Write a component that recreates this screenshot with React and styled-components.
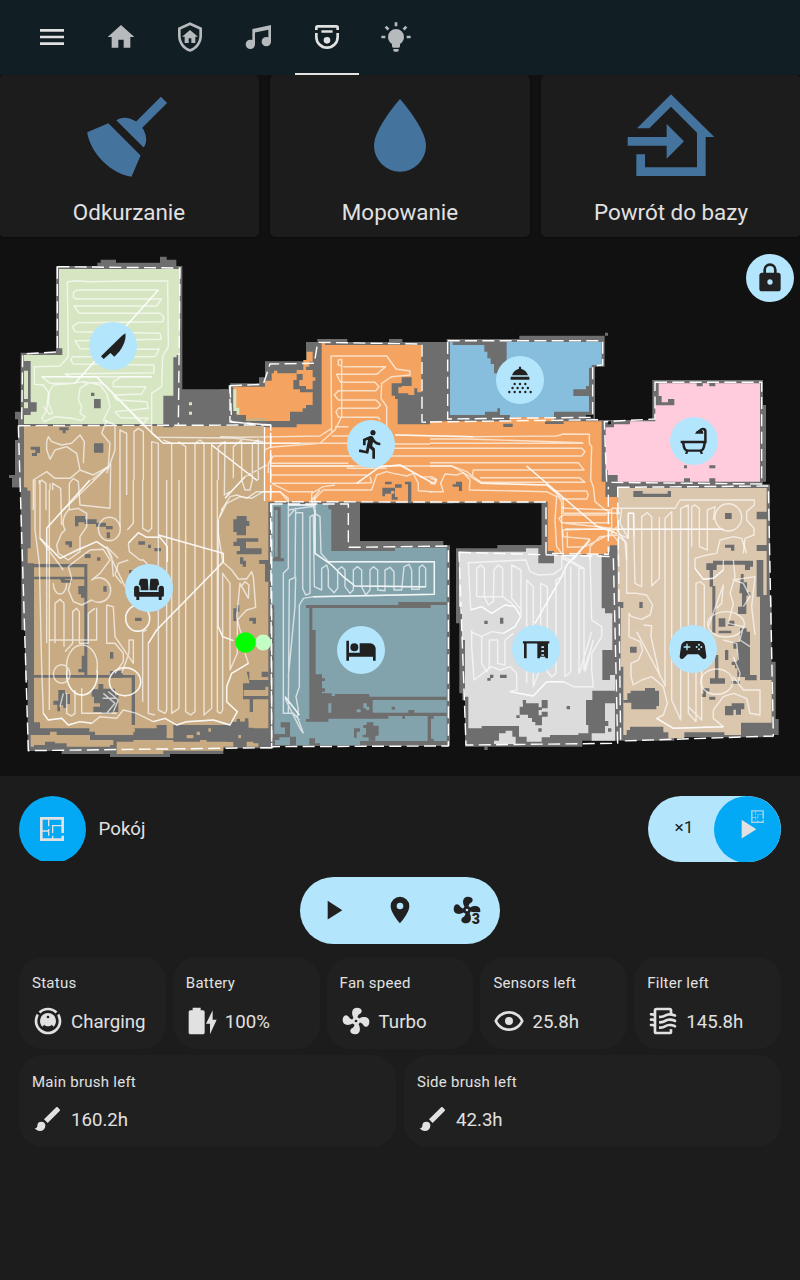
import React from "react";
import styled, { createGlobalStyle } from "styled-components";

const GlobalStyle = createGlobalStyle`
  * { box-sizing: border-box; }
  body {
    margin: 0;
    background: #111111;
    color: #e1e1e1;
    font-family: Roboto, "Liberation Sans", sans-serif;
  }
`;

const icons = {
  menu: "M3,6H21V8H3V6M3,11H21V13H3V11M3,16H21V18H3V16Z",
  home: "M10,20V14H14V20H19V12H22L12,3L2,12H5V20H10Z",
  shield:
    "M11,13H13V16.5H16V11.8H18L12,6.8L6,11.8H8V16.5H11V13M21,11C21,16.55 17.16,21.74 12,23C6.84,21.74 3,16.55 3,11V5L12,1L21,5V11M12,21C15.75,20 19,15.54 19,11.22V6.3L12,3.18L5,6.3V11.22C5,15.54 8.25,20 12,21Z",
  music:
    "M21,3V15.5A3.5,3.5 0 0,1 17.5,19A3.5,3.5 0 0,1 14,15.5A3.5,3.5 0 0,1 17.5,12C18.04,12 18.55,12.12 19,12.34V6.47L9,8.6V17.5A3.5,3.5 0 0,1 5.5,21A3.5,3.5 0 0,1 2,17.5A3.5,3.5 0 0,1 5.5,14C6.04,14 6.55,14.12 7,14.34V6L21,3Z",
  vacuumFront:
    "M3,6.75V5A2,2 0 0,1 5,3H19A2,2 0 0,1 21,5V6.75H19V5H5V6.75ZM7.8,7H16.2V8.8H7.8ZM3,9H5V12A7,7 0 0,0 19,12V9H21V12A9,9 0 0,1 3,12ZM12,12A2.5,2.5 0 1,1 12,17A2.5,2.5 0 1,1 12,12Z",
  bulb:
    "M12,6A6,6 0 0,1 18,12C18,14.22 16.79,16.16 15,17.2V19A1,1 0 0,1 14,20H10A1,1 0 0,1 9,19V17.2C7.21,16.16 6,14.22 6,12A6,6 0 0,1 12,6M14,21V22A1,1 0 0,1 13,23H11A1,1 0 0,1 10,22V21H14M20,11H23V13H20V11M1,11H4V13H1V11M13,1V4H11V1H13M4.92,3.5L7.05,5.64L5.63,7.05L3.5,4.93L4.92,3.5M16.95,5.63L19.07,3.5L20.5,4.93L18.37,7.05L16.95,5.63Z",
  broom:
    "M19.36,2.72L20.78,4.14L15.06,9.85C16.13,11.39 16.28,13.24 15.38,14.44L9.06,8.12C10.26,7.22 12.11,7.37 13.65,8.44L19.36,2.72M5.93,17.57C3.92,15.56 2.69,13.16 2.35,10.92L7.23,8.83L14.67,16.27L12.58,21.15C10.34,20.81 7.94,19.58 5.93,17.57Z",
  water:
    "M12,20A6,6 0 0,1 6,14C6,10 12,3.25 12,3.25C12,3.25 18,10 18,14A6,6 0 0,1 12,20Z",
  homeImport:
    "M15,13L11,17V14H2V12H11V9L15,13M4,16H6V19H18V11L12,5L7,10H4.15L12,2.15L22,12H20V21H4V16Z",
  lock:
    "M12,17A2,2 0 0,0 14,15C14,13.89 13.1,13 12,13A2,2 0 0,0 10,15A2,2 0 0,0 12,17M18,8A2,2 0 0,1 20,10V20A2,2 0 0,1 18,22H6A2,2 0 0,1 4,20V10C4,8.89 4.9,8 6,8H7V6A5,5 0 0,1 12,1A5,5 0 0,1 17,6V8H18M12,3A3,3 0 0,0 9,6V8H15V6A3,3 0 0,0 12,3Z",
  play: "M8,5.14V19.14L19,12.14L8,5.14Z",
  marker:
    "M12,11.5A2.5,2.5 0 0,1 9.5,9A2.5,2.5 0 0,1 12,6.5A2.5,2.5 0 0,1 14.5,9A2.5,2.5 0 0,1 12,11.5M12,2A7,7 0 0,0 5,9C5,14.25 12,22 12,22C12,22 19,14.25 19,9A7,7 0 0,0 12,2Z",
  fan:
    "M12,11A1,1 0 0,0 11,12A1,1 0 0,0 12,13A1,1 0 0,0 13,12A1,1 0 0,0 12,11M12.5,2C17,2 17.11,5.57 14.75,6.75C13.76,7.24 13.32,8.29 13.13,9.22C13.61,9.42 14.03,9.73 14.35,10.13C18.05,8.13 22.03,8.92 22.03,12.5C22.03,17 18.46,17.1 17.28,14.73C16.78,13.74 15.72,13.3 14.79,13.11C14.59,13.59 14.28,14 13.88,14.34C15.87,18.03 15.08,22 11.5,22C7,22 6.91,18.42 9.27,17.24C10.25,16.75 10.69,15.71 10.89,14.79C10.4,14.59 9.97,14.27 9.65,13.87C5.96,15.85 2,15.07 2,11.5C2,7 5.56,6.89 6.74,9.26C7.24,10.25 8.29,10.68 9.22,10.87C9.41,10.39 9.73,9.97 10.14,9.65C8.15,5.96 8.94,2 12.5,2Z",
  robot:
    "M12,2C14.65,2 17.19,3.06 19.07,4.93L17.65,6.35C16.15,4.85 14.12,4 12,4C9.88,4 7.84,4.84 6.35,6.35L4.93,4.93C6.81,3.06 9.35,2 12,2M3.66,6.5L5.11,7.94C4.39,9.17 4,10.57 4,12A8,8 0 0,0 12,20A8,8 0 0,0 20,12C20,10.57 19.61,9.17 18.88,7.94L20.34,6.5C21.42,8.12 22,10.04 22,12A10,10 0 0,1 12,22A10,10 0 0,1 2,12C2,10.04 2.58,8.12 3.66,6.5M12,6A6,6 0 0,1 18,12C18,13.59 17.37,15.12 16.24,16.24L14.83,14.83C14.08,15.58 13.06,16 12,16C10.94,16 9.92,15.58 9.17,14.83L7.76,16.24C6.63,15.12 6,13.59 6,12A6,6 0 0,1 12,6M12,8A1,1 0 0,0 11,9A1,1 0 0,0 12,10A1,1 0 0,0 13,9A1,1 0 0,0 12,8Z",
  battery:
    "M23,11H20V4L15,14H18V22M12.67,4H11V2H5V4H3.33A1.33,1.33 0 0,0 2,5.33V20.67C2,21.4 2.6,22 3.33,22H12.67C13.4,22 14,21.4 14,20.67V5.33A1.33,1.33 0 0,0 12.67,4Z",
  eye:
    "M12,9A3,3 0 0,1 15,12A3,3 0 0,1 12,15A3,3 0 0,1 9,12A3,3 0 0,1 12,9M12,4.5C17,4.5 21.27,7.61 23,12C21.27,16.39 17,19.5 12,19.5C7,19.5 2.73,16.39 1,12C2.73,7.61 7,4.5 12,4.5M3.18,12C4.83,15.36 8.24,17.5 12,17.5C15.76,17.5 19.17,15.36 20.82,12C19.17,8.64 15.76,6.5 12,6.5C8.24,6.5 4.83,8.64 3.18,12Z",
  filter:
    "M19,18.31V20A2,2 0 0,1 17,22H7A2,2 0 0,1 5,20V16.3C4.54,16.12 3.95,16 3,16A1,1 0 0,1 2,15A1,1 0 0,1 3,14C3.82,14 4.47,14.08 5,14.21V12.3C4.54,12.12 3.95,12 3,12A1,1 0 0,1 2,11A1,1 0 0,1 3,10C3.82,10 4.47,10.08 5,10.21V8.3C4.54,8.12 3.95,8 3,8A1,1 0 0,1 2,7A1,1 0 0,1 3,6C3.82,6 4.47,6.08 5,6.21V4A2,2 0 0,1 7,2H17A2,2 0 0,1 19,4V6.16C20.78,6.47 21.54,7.13 21.71,7.29C22.1,7.68 22.1,8.32 21.71,8.71C21.32,9.1 20.8,9.09 20.29,8.71C20.29,8.71 19.25,8 17,8C15.74,8 14.91,8.41 13.95,8.9C12.91,9.41 11.74,10 10,10C9.64,10 9.31,10 9,9.96V7.95C9.3,8 9.63,8 10,8C11.26,8 12.09,7.59 13.05,7.11C14.09,6.59 15.27,6 17,6V4H7V20H17V18C18.5,18 18.97,18.29 19,18.31M17,10C15.27,10 14.09,10.59 13.05,11.11C12.09,11.59 11.26,12 10,12C9.63,12 9.3,12 9,11.95V13.96C9.31,14 9.64,14 10,14C11.74,14 12.91,13.41 13.95,12.9C14.91,12.42 15.74,12 17,12C19.25,12 20.29,12.71 20.29,12.71C20.8,13.1 21.32,13.1 21.71,12.71C22.1,12.32 22.1,11.69 21.71,11.29C21.5,11.08 20.25,10 17,10M17,14C15.27,14 14.09,14.59 13.05,15.11C12.09,15.59 11.26,16 10,16C9.63,16 9.3,16 9,15.95V17.96C9.31,18 9.64,18 10,18C11.74,18 12.91,17.41 13.95,16.9C14.91,16.42 15.74,16 17,16C19.25,16 20.29,16.71 20.29,16.71C20.8,17.1 21.32,17.1 21.71,16.71C22.1,16.32 22.1,15.69 21.71,15.29C21.5,15.08 20.25,14 17,14Z",
  brush:
    "M20.71,4.63L19.37,3.29C19,2.9 18.35,2.9 17.96,3.29L9,12.25L11.75,15L20.71,6.04C21.1,5.65 21.1,5 20.71,4.63M7,14A3,3 0 0,0 4,17C4,18.31 2.84,19 2,19C2.92,20.22 4.5,21 6,21A4,4 0 0,0 10,17A3,3 0 0,0 7,14Z",
  floorPlan:
    "M10 5V10H9V5H5V13H9V12H10V17H9V14H5V19H12V17H13V19H19V17H21V21H3V3H21V15H19V10H13V15H12V9H19V5H10Z",
  knife: "M21.3,2.5C21.7,5.5 21.1,8.5 19.6,11.5C18,15 15.8,17.6 13,20L10.1,17.2L5,21.8L3,19.7L18.7,4.3Z",
  sofa:
    "M6.3,5H10.3Q11,5 11.1,5.8L11.6,13.7H5.8V12Q5.8,9.8 4.3,9.4L5,6.2Q5.2,5 6.3,5ZM13.7,5H17.7Q18.8,5 19,6.2L19.7,9.4Q18.2,9.8 18.2,12V13.7H12.4L12.9,5.8Q13,5 13.7,5ZM0.8,12.4A2,2 0 0,1 4.8,12.4V15H19.2V12.4A2,2 0 0,1 23.2,12.4V17.4Q23.2,18.6 22,18.6H21.5V21H19.3V18.6H4.7V21H2.5V18.6H2Q0.8,18.6 0.8,17.4Z",
  run:
    "M13.49,5.48C14.59,5.48 15.49,4.58 15.49,3.48C15.49,2.38 14.59,1.48 13.49,1.48C12.39,1.48 11.49,2.38 11.49,3.48C11.49,4.58 12.39,5.48 13.49,5.48M9.89,19.38L10.89,14.98L12.99,16.98V22.98H14.99V15.48L12.89,13.48L13.49,10.48C14.79,11.98 16.79,12.98 18.99,12.98V10.98C17.09,10.98 15.49,9.98 14.69,8.58L13.69,6.98C13.29,6.38 12.69,5.98 11.99,5.98C11.69,5.98 11.49,6.08 11.19,6.08L5.99,8.28V12.98H7.99V9.58L9.79,8.88L8.19,16.98L3.29,15.98L2.89,17.98L9.89,19.38Z",
  shower:
    "M11.2,2H12.8V3.6C15.2,4.2 17.2,6 18,8.5H6C6.8,6 8.8,4.2 11.2,3.6ZM5,9.6H19V11.8H5ZM7.1,15a.9,.9 0 1,0 1.8,0a.9,.9 0 1,0 -1.8,0M11.1,15a.9,.9 0 1,0 1.8,0a.9,.9 0 1,0 -1.8,0M15.1,15a.9,.9 0 1,0 1.8,0a.9,.9 0 1,0 -1.8,0M5.5,18a.9,.9 0 1,0 1.8,0a.9,.9 0 1,0 -1.8,0M9.3,18a.9,.9 0 1,0 1.8,0a.9,.9 0 1,0 -1.8,0M13.1,18a.9,.9 0 1,0 1.8,0a.9,.9 0 1,0 -1.8,0M17,18a.9,.9 0 1,0 1.8,0a.9,.9 0 1,0 -1.8,0M3.1,21a.9,.9 0 1,0 1.8,0a.9,.9 0 1,0 -1.8,0M7.1,21a.9,.9 0 1,0 1.8,0a.9,.9 0 1,0 -1.8,0M11.1,21a.9,.9 0 1,0 1.8,0a.9,.9 0 1,0 -1.8,0M15.1,21a.9,.9 0 1,0 1.8,0a.9,.9 0 1,0 -1.8,0M19.1,21a.9,.9 0 1,0 1.8,0a.9,.9 0 1,0 -1.8,0",
  bath:
    "M2,11.9H19.6V5.5A1.6,1.6 0 0,0 17.9,3.6Q19.1,4.8 19,6.5H12.8Q13.2,4.6 15.8,3.6Q17,2 18.7,2A2.9,2.9 0 0,1 21.5,5V13.6H20.9L20.3,16.8Q19.8,18.8 18.2,19.7L18.6,21.7H17L16.4,20H7.6L7,21.7H5.4L5.8,19.7Q4.1,18.8 3.6,16.8L3,13.6H2ZM4.9,13.6L5.4,16.4Q5.8,18.4 7.6,18.4H16.3Q18.1,18.4 18.5,16.4L19,13.6Z",
  bed:
    "M19,7H11V14H3V5H1V20H3V17H21V20H23V11A4,4 0 0,0 19,7M7,13A3,3 0 0,0 10,10A3,3 0 0,0 7,7A3,3 0 0,0 4,10A3,3 0 0,0 7,13Z",
  desk:
    "M2.2,6.2H22V7.9H21V19H19V17.8H15V19H13V7.9H5V19H3V7.9H2.2ZM16,10V11.2H18V10ZM16,13V14.2H18V13ZM16,16V17H18V16Z",
  pad:
    "M7.97,16L5,19C4.67,19.3 4.23,19.5 3.75,19.5A1.75,1.75 0 0,1 2,17.75V17.5L3,10.12C3.21,7.81 5.14,6 7.5,6H16.5C18.86,6 20.79,7.81 21,10.12L22,17.5V17.75A1.75,1.75 0 0,1 20.25,19.5C19.77,19.5 19.33,19.3 19,19L16.03,16H7.97M7,8V10H5V11H7V13H8V11H10V10H8V8H7M16.5,8A0.75,0.75 0 0,0 15.75,8.75A0.75,0.75 0 0,0 16.5,9.5A0.75,0.75 0 0,0 17.25,8.75A0.75,0.75 0 0,0 16.5,8M14.75,9.75A0.75,0.75 0 0,0 14,10.5A0.75,0.75 0 0,0 14.75,11.25A0.75,0.75 0 0,0 15.5,10.5A0.75,0.75 0 0,0 14.75,9.75M18.25,9.75A0.75,0.75 0 0,0 17.5,10.5A0.75,0.75 0 0,0 18.25,11.25A0.75,0.75 0 0,0 19,10.5A0.75,0.75 0 0,0 18.25,9.75M16.5,11.5A0.75,0.75 0 0,0 15.75,12.25A0.75,0.75 0 0,0 16.5,13A0.75,0.75 0 0,0 17.25,12.25A0.75,0.75 0 0,0 16.5,11.5Z",
};

const IconSvg = styled.svg`
  display: block;
  flex: none;
  overflow: visible;
  width: ${(p) => p.$size}px;
  height: ${(p) => p.$size}px;
  fill: currentColor;
  fill-rule: evenodd;
`;

function Icon({ name, size = 32 }) {
  return (
    <IconSvg $size={size} viewBox="0 0 24 24">
      <path d={icons[name]} />
    </IconSvg>
  );
}

const Page = styled.div`
  width: 800px;
  height: 1280px;
  display: flex;
  flex-direction: column;
  overflow: hidden;
`;

const Header = styled.header`
  height: 75px;
  flex: none;
  display: flex;
  gap: 4.8px;
  padding-left: 20.2px;
  background: #111e24;
`;

const Tab = styled.div`
  width: 64px;
  display: flex;
  align-items: center;
  justify-content: center;
  padding-top: 1px;
  border-bottom: 2px solid ${(p) => (p.$active ? "#e6e6e6" : "transparent")};
  color: ${(p) => (p.$bright ? "#e1e1e1" : "#b7babc")};
`;

const Actions = styled.section`
  flex: none;
  display: grid;
  grid-template-columns: repeat(3, 1fr);
  gap: 11px;
  height: 162px;
  margin: 0 -1px;
`;

const ActionCard = styled.div`
  display: flex;
  flex-direction: column;
  align-items: center;
  padding-top: 10px;
  border-radius: 5px;
  background: #1c1c1c;
  box-shadow: 0 1px 2px rgba(0, 0, 0, 0.4);
  color: #44739e;
`;

const ActionLabel = styled.div`
  margin-top: 9px;
  font-size: 22.4px;
  line-height: 28px;
  color: #e1e1e1;
`;

const MapArea = styled.section`
  position: relative;
  flex: none;
  height: 539px;
`;

const FloorSvg = styled.svg`
  display: block;
  width: 800px;
  height: 539px;
`;

const Pin = styled.div`
  position: absolute;
  left: ${(p) => p.$x - 24}px;
  top: ${(p) => p.$y - 261}px;
  width: 48px;
  height: 48px;
  border-radius: 50%;
  display: flex;
  align-items: center;
  justify-content: center;
  background: #b3e5fc;
  color: #212121;
`;

const Panel = styled.section`
  flex: 1;
  display: flex;
  flex-direction: column;
  padding: 20px 19px 0;
  background: #1c1c1c;
`;

const ModeRow = styled.div`
  height: 66px;
  display: flex;
  align-items: flex-start;
  justify-content: space-between;
`;

const ModeGroup = styled.div`
  display: flex;
  align-items: center;
  gap: 12.6px;
  height: 65px;
  font-size: 18.67px;
`;

const ModeClip = styled.div`
  height: 64.6px;
  overflow: hidden;
`;

const RoundButton = styled.div`
  position: relative;
  width: 67px;
  height: 67px;
  border-radius: 50%;
  display: flex;
  align-items: center;
  justify-content: center;
  padding: 0 1px 1px 0;
  background: #03a9f4;
  color: #e1e1e1;
`;

const RunPill = styled.div`
  width: 133px;
  height: 66px;
  display: flex;
  justify-content: space-between;
  border-radius: 33px;
  overflow: hidden;
  background: #b3e5fc;
`;

const Repeat = styled.div`
  width: 66px;
  padding: 19.4px 0 0 26.4px;
  font-size: 17.4px;
  line-height: 24px;
  color: #212121;
`;

const Badge = styled.div`
  position: absolute;
  left: 34.5px;
  top: 11.5px;
  opacity: 0.75;
`;

const Controls = styled.div`
  align-self: center;
  width: 200px;
  height: 67px;
  margin-top: 15px;
  padding-bottom: 1px;
  display: grid;
  grid-template-columns: repeat(3, 1fr);
  align-items: center;
  justify-items: center;
  border-radius: 33.5px;
  background: #b3e5fc;
  color: #212121;
`;

const StatRow = styled.div`
  display: grid;
  grid-template-columns: repeat(${(p) => p.$cols}, 1fr);
  gap: ${(p) => (p.$cols === 2 ? 8 : 7)}px;
  margin-top: ${(p) => p.$top}px;
`;

const StatCard = styled.div`
  height: 92px;
  padding: ${(p) => (p.$wide ? 17 : 16)}px 0 0 13px;
  border-radius: 24px;
  background: #202020;
`;

const StatLabel = styled.div`
  font-size: 15px;
  line-height: 20px;
  letter-spacing: 0.26px;
`;

const StatValue = styled.div`
  display: flex;
  align-items: center;
  gap: 7px;
  margin-top: ${(p) => (p.$wide ? 9 : 10)}px;
  font-size: 18.67px;
  line-height: 32px;

  span { padding-top: 3px; }
`;

const GRAY = "#6e6e6e";
const GREEN = "#d6e5c2";
const TAN = "#c8ab83";
const ORANGE = "#f4a460";
const TEAL = "#82a3ac";
const LIGHT = "#dcdcdc";
const SAND = "#dbc6ae";

// Every area has its own origin and is drawn at three units per pixel.
const kitchen = "0,250";
const lounge = "0,480";
const hall = "220,320";
const east = "430,320";
const bedroom = "260,490";
const office = "450,480";

const walls = [
  [kitchen, GRAY, "M168,48H292V38H302V29H348V38H480V20H500V29H529V48H547V418H690V400H840V525H800V780H62V712H36V684H27V675H45V570H54V508H45V485H62V308H168Z"],
  [lounge, GRAY, "M36,0H815V805H670V822H510V831H330V822H185V813H83V600H75V450H64V205H62V22H36Z"],
  [hall, GRAY, "M0,208H25V195H117V172H135V124H258V66H292V57H382V66H507V57H547V66H720V310H700V550H130V320H0Z"],
  [east, GRAY, "M0,66H50V57H268V47H525V38H534V47H524V140H495V300H667V180H999V255H1008V485H998V493H1018V720H335V550H0Z"],
  [bedroom, GRAY, "M0,38H300V153H550V166H570V768H40V776H0Z"],
  [office, GRAY, "M18,205H142V195H275V60H500V0H937V15H960V350H965V545H977V717H986V765H970V772H673V782H397V800H113V810H103V800H45V660H37V640H28V430H18Z"],
];

const floors = [
  [kitchen, GREEN, "M177,57H540V315H530V322H520V437H490V522H72V495H92V485H110V457H92V333H72V315H187V295H177ZM567,457h9v9h-9zM567,485h9v9h-9z"],
  [kitchen, GREEN, "M72,362h12v85h-12zM72,457h12v18h-12z"],
  [kitchen, TAN, "M72,528H490V532H520V528H792V780H92V722H82V712H72Z"],
  [lounge, TAN, "M75,0H795V65H805V240H778V252H795V305H805V600V745H745V725H690V735H520V775H500V735H470V745H400V765H285V755H268V745H120V727H102V250H83V205H92V22H75Z"],
  [lounge, TAN, "M92,765H150V755H170V765H270V780H340V795H330V800H200V790H165V785H135V795H102V800H92ZM350,785H400V780H520V785H600V780H620V785H700V800H670V812H490V822H350ZM740,782h20v8h15v10h-35z"],
  [hall, ORANGE, "M305,66H315V75H604V217H592V205H583V225H565V220H535V202H545V198H575V172H545V190H515V227H525V237H533V313H720V545H134V322H230V313H305Z"],
  [hall, ORANGE, "M40,200H135V182H155V160H162V152H172V160H230V150H250V120H260V95H278V125H268V140H258V150H278V172H286V182H278V208H258V198H238V180H248V162H230V180H220V208H240V217H278V255H258V265H248V275H210V303H78V285H50V262H40Z"],
  [hall, GREEN, "M40,208h9v55h9v20h-8v-10h-10z"],
  [hall, "#cbb07f", "M78,294h58v9h-58z"],
  [east, ORANGE, "M0,304H240V292H372V304H515V485H527V530H563V676H540V695H530V703H372V693H353V545H0Z"],
  [east, "#87bedd", "M60,66H68V75H163V95H172V115H182V132H192V160H230V66H515V135H485V143H477V198H468V208H430V228H477V275H372V292H240V285H210V265H202V275H165V285H60Z"],
  [east, "#ffccde", "M686,190H800V199H818V190H838V199H856V190H990V485H856V475H838V485H780V475H762V485H563V465H533V450H527V322H552V313H600V304H676V256H733V237H714V247H695V228H686Z"],
  [bedroom, TEAL, "M35,42H205V58H214V183H405V173H560V753H300V765H180V760H165V745H148V765H108V740H90V700H65V712H75V735H90V765H45V750H58V735H43V345H35Z"],
  [office, LIGHT, "M27,215H228V205H265V250H312V225H455V385H465V400H487V510H457V600H480V585H495V632H427V660H408V735H415V760H385V765H300V772H275V785H230V770H207V738H95V745H55V650H45V480H36V380H27ZM465,670h30v112h-70v-22h40v-22h10v-15h-10zM147,760h20v-8h20v18h10v22h-65v-10h15z"],
  [office, SAND, "M503,24H950V95H920V118H950V195H920V213H950V345H940V240H920V350H930V600H965V728H873V765H823V757H703V775H655V757H640V740H540V750H530V765H520V560H512V370H503Z"],
];

const obstacles = [
  [kitchen, GRAY, "M273,428h10v10h-10zM282,447h20v28h-20zM178,532h28v9h-9v9h-9v-9h-10zM92,590h28v19h-9v9h-15v-9h10v-10h-14zM282,580h28v28h-28z"],
  [lounge, GRAY, "M102,252H262V585H405V735H395V593H102V585H253V298H102V290H253V262H102ZM225,108h30v10h35v10h28v10h20v10h-20v-8h-30v-8h-35v-5h-18v12h-10zM320,157h10v17h-10zM196,184h20v18h-10v-8h-10zM254,222h18v12h-18zM291,232h10v10h-10zM310,318h10v17h-10zM330,516h10v20h-10zM387,270h10v10h-10zM415,184h20v10h-20zM444,194h9v10h-9zM463,204h20v10h-20zM405,413h20v10h-20zM235,318h18v35h-10v-10h-8zM177,290h18v10h20v8h-30zM245,527h10v50h-20v-10h10z"],
  [lounge, GRAY, "M700,118h10v-10h30v15h8v15h-10v28h-28v-10h-10zM700,185h10v-10h65v10h-37v20h47v18h-75v-10h10v-15h-20zM720,232h10v10h8v18h-10v-8h-8zM775,242h30v10h-10v50h10v-50h-20zM710,375h8v20h-8v28h-10v-38h10zM748,413h20v18h-10v-8h-10zM740,575h8v25h60v20h-12v10h-65v18h75v10h-47v38h-10v-38h-20v-48h20zM785,575h20v16h-20zM710,717h10v8h15v-10h10v28h15v42h-80v-28h30zM275,628h20v-16h15v14h35v20h10v50h-20v6h-30v-6h-25v-16h20v-10h-18v-20h-7zM175,630h20v12h15v30h-10v12h-10v-8h-10v18h-8v-20h-12v-12h15zM330,573h38v20h-38z"],
  [lounge, TAN, "M395,745h10v10h-10zM560,765h20v10h-20zM590,755h10v10h-10zM625,745h8v10h-8zM715,765h8v10h-8z"],
  [hall, GRAY, "M495,485h20v8h-20zM487,503h38v28h8v8h-18v-18h8v-8h-10v8h-18v8h-8zM525,493h20v10h-20zM555,485h19v60h-10v-52h-9z"],
  [east, GRAY, "M762,436h9v9h-9zM838,436h18v9h-18zM68,493h10v-8h18v28h-9v-13h-19zM220,311h28v10h-28zM345,304h56v8h-56zM527,485h36v45h-36z"],
  [east, "#111111", "M533,304h10v9h-10zM468,285h22v10h-22z"],
  [bedroom, GRAY, "M42,50h20v155h10v9h-34v-9h4zM138,345H415V336H560V345H512V354H157V420H167V553H186V565H195V573H186V595H195V605H186V610H215V618H225V612H328V620H560V630H338V668H560V678H435V686H427V678H385V686H205V695H138V687H148V354H138ZM395,650h10v9h-10zM445,660h18v9h-18zM503,678h18v8h-8v60h8v8h-18zM310,705h10v-8h20v10h16v30h-10v15h-20v-10h-18v-8h10v-20h-8zM282,715h18v10h-10v18h-8zM62,697h28v45h-50v-10h35v-20h-13z"],
  [bedroom, TEAL, "M44,60h9v140h-9zM205,640h9v28h-9zM310,640h10v10h8v10h-10v-5h-8zM290,658h12v9h-12z"],
  [office, GRAY, "M550,33h28v8h75v-8h10v18h-113zM825,99h20v18h-20zM825,194h28v18h-10v-9h-18zM769,250h20v-8h120v18h-9v10h-15v-16h-85v16h-11v50h-10v-50h-10zM787,318h9v140h-9zM795,525h10v70h20v16h-45v-16h15zM873,282h8v25h10v30h10v10h-12v55h-25v-22h12v-40h-8zM806,415h20v25h-20zM835,422h18v16h-18zM806,452h38v8h-38zM870,445h20v10h10v130h20v16h-35v-10h-23v-85h-12v-20h20zM825,510h10v30h-10zM845,545h20v20h-10v-10h-10zM845,603h25v8h-25zM568,366h10v18h-10zM540,500h20v18h-20zM570,632h15v-8h30v8h12v46h-8v10h-75v-20h-24v-8h12v-20h10v-8zM825,678h20v-8h38v18h-10v16h-15v-15h-8v17h-25zM760,625h18v10h-10v16h-14v-10h6zM778,650h18v9h-18zM503,366h17v18h-17z"],
  [office, GRAY, "M218,660h10v10h38v12h10v8h-10v16h10v30h-20v-10h-10v-12h-12v-10h-25v10h-10v-8h10v-26h10zM275,660h18v25h-18zM275,695h18v15h-18zM350,678h10v10h-10zM150,584h20v10h-20zM120,584h10v10h-8v8h-10v-8h8zM103,422h10v10h-10zM150,413h10v18h-10zM265,745h10v10h-10zM474,745h10v10h-10z"],
];

const tracks = [
  [kitchen, "M205,320L202,95L230,92L270,95L385,93L503,93L505,290L488,320L485,410L455,430V550L470,562L700,564L790,575M205,320L180,348L103,350V403L130,405L148,430L145,460L158,490L148,492L130,470M475,120H230L220,128V142L230,147H370L485,147L470,168H222L238,190H480L492,202L488,215L235,218L217,230L225,245L480,250L484,268L225,272L240,296L478,298L465,320L218,320L212,330L220,342L462,345V368L195,372L210,380H455"],
  [kitchen, "M475,120L225,400L160,405L145,430M125,380H290L430,525L490,580H790M125,380L150,400L215,400L250,395L300,405L320,430L330,470L310,510L345,525V600L320,670M325,650L275,690M455,380H365L340,395V410H438L425,432L340,435L350,450L440,455L445,475L345,485L362,503L445,505L430,520M250,398L300,398L320,410L440,530"],
  [kitchen, "M265,400L240,415L235,450L245,470L240,490L255,500L245,512L215,505L165,500L135,515L125,505L140,480L145,430M140,575L145,560L155,575L185,585L215,580L240,555L253,575L250,640M140,575V600L150,628L165,600L200,590L230,610L240,660L210,685H165L140,665L100,690V780M240,660L280,675L325,650L330,580L305,550L320,510"],
  [kitchen, "M360,690V540L380,550V735M402,690V545L415,535L430,545V690M455,690V575L475,580V690M490,570L515,580V690M535,575L557,590V690M585,780V580L600,570L612,580V690M635,580V780M655,690V590L675,575L673,735L690,725M700,685V590L725,570V690L735,720H750L757,690V580L775,570V690M635,585L772,692M675,745L735,680L800,645M665,780L690,740L710,735L740,745L770,725L840,725M118,690V700L125,690L138,700V780M158,720V700L182,715M208,780V700L220,685L235,695L240,765L330,775L332,640M150,700V720"],
  [lounge, "M105,0V150L118,250M120,10V175L190,270M148,30V690M182,25L185,135M118,250L125,560L130,700L145,720L185,715L205,735L240,725L275,730L300,710L350,715L370,690L410,700L460,725L495,715L530,735L560,725L640,720L690,735L712,695L680,665V620L695,580L745,550L735,520M360,0V140M382,150L400,130V0M428,0V145L445,155L455,145V0M475,0V690L495,700L500,690V0M515,0V700L537,685V0M557,0V695L572,705L585,695V90M612,0V705L635,685V90M652,0V695L662,700L668,690V280L690,310V570L712,520V420L740,390L767,382L760,290L755,275L740,297H715L695,270L668,245L655,160V120L668,85"],
  [lounge, "M475,165L670,220V245L470,450L445,490V700L465,705M428,665V455L440,450M270,0L140,145V490M205,90L235,85L260,100V140L240,170V215L205,240L175,220L170,195L185,160L195,150Q180,120 205,90ZM295,147a33,35 0 1,0 66,0a33,35 0 1,0 -66,0M377,415a36,39 0 1,0 72,0a36,39 0 1,0 -72,0M328,605a47,42 0 1,0 94,0a47,42 0 1,0 -94,0M201,570a46,62 0 1,0 90,0a46,62 0 1,0 -90,0M160,582a25,28 0 1,0 50,0a25,28 0 1,0 -50,0M160,310a20,32 0 1,0 40,0M275,360A36,37 0 1,0 275,300L300,280L330,240L310,208L270,210L230,240L205,260L215,295L205,330L220,365L245,375ZM385,190L415,158L440,172H480L502,200V245M385,190L388,215L420,240H430L445,255M345,285L355,250L385,240M345,285L365,310"],
  [lounge, "M165,490V370L180,358L192,370V500M195,515L218,490V395L230,385L238,395V490H265V400L285,385M148,480H290V383M320,375V490H345L370,520V545L345,580M320,375L340,380L345,470L400,550V480H387V520L365,580M180,680L190,640M310,640L345,670L320,700M325,635L355,660L340,695M308,655H350M245,625V700H350M200,640V700L215,708L225,700V630M655,120V440L668,470L700,482M735,485L720,450L710,410L720,310L745,355L747,315L735,305L722,320M120,175L180,235L230,210L290,185L320,205L375,320M340,290L335,230L320,200L355,235"],
  [hall, "M335,335L333,108L500,108L528,147L570,153V165L515,170L485,190L483,235L500,260V350M365,138L355,135V120L365,118V290L345,330L300,370L150,382M370,140H497L470,163H350L362,187H465L477,200L468,212H355L343,225L355,240H468L482,255L472,265H355L348,275L355,292H475L480,300M345,320H385M335,348H390M0,350L65,352L300,348L335,325M0,368L134,370H390M150,382L134,390M525,345L630,347M520,372H630M520,385H630M160,408H400M500,408H630M150,430H385M150,438H630M150,465H440M155,490L205,515H280M155,490L410,490L455,488M160,408L145,430V460"],
  [hall, "M410,490L480,440L540,435L640,490L650,478L635,470L600,472M455,510L470,465L500,455L520,460L560,468L580,460L595,490V512L635,515M380,445H500M455,510H310L280,540M455,488L450,470M310,500L275,520V545M310,500L345,495M0,590L20,550L60,530L95,535L130,515L180,515L205,545"],
  [east, "M0,347L130,350L380,348L400,342L478,343V370L485,380L482,480L490,500L495,545L520,565L545,580L570,580M0,357H110L460,368M0,370H460M0,385H455L465,395L455,408H0M0,428H445L462,450H130L127,468L155,487H465L448,473H150M0,438L65,438L110,455L155,490L350,495L375,515L395,545V600L400,720M290,438L350,490L500,618L560,640L595,655M360,500L400,540V580H540M0,515H40L32,490L45,462L80,465L100,458L120,480L118,510L350,515L380,530L375,600L380,680L395,700M0,475L20,480L15,492L0,490"],
  [east, "M370,513H470L475,525L470,537H395M395,560L405,565L545,570M400,585H530M400,585L387,595L395,608H540M405,610L545,625L398,630L400,650L480,657M405,628H880M412,635V682L465,680L545,640L560,620M545,565V640L565,665V720M560,565L565,620M575,565L570,610L595,655V580H612V650M785,680V560L795,555L808,565V680L832,690V570L855,560L850,600M545,565H735L750,540H973V555L950,575V600L972,625V645L945,655L940,700M855,592a40,41 0 1,0 80,0a40,41 0 1,0 -80,0M480,657L430,720M480,720V680L510,650L560,645L585,665L590,720"],
  [bedroom, "M85,50V235L70,250V670H85M85,80L107,55L105,262L88,270L85,670M107,262L105,350L85,560M85,60L165,48M107,68H128V295L137,315L150,310V80L160,75L163,290L185,300V235L200,225L205,240V290L222,308L233,295V240L245,230L255,240V290L270,310L280,300V240L292,230L305,240V290L317,315L330,300V240L340,230L353,240V300L375,302V240L390,232L402,245V300L425,300L432,230L447,223L455,240V298H478V232L487,225L497,235V290L285,288L250,260L215,225L165,190V20M180,0L155,30L165,70L180,80L183,190L205,215H523V313L160,320L130,325L118,345V590L108,620L115,660L112,680L130,730M75,620L118,675M75,625L90,655L120,715L130,730M70,670H100L118,690M60,5L85,25V75M85,45H165"],
  [office, "M62,390L55,248L228,240L240,275L265,285L310,283L335,265V225M80,350V265L92,255L103,265V350L115,375L130,365L132,270L145,255L158,265V350H80M158,350L185,370L213,405V270L185,255V355L215,390M62,390L95,380L125,400L165,375L195,380L212,410L195,440L160,460L125,455L95,470L62,455M65,450V500L72,600L125,560L150,570L180,560L200,580V630L180,635L250,648L290,605L340,605L370,620H430L425,570V520L455,470V440L425,420L420,225M95,470V550L110,575L118,560V480H143V550L165,555V480L190,460"],
  [office, "M230,610V300L250,320V620L272,560V310L292,320V575L305,590L318,580V300L335,290M345,590V260M345,590L362,575V260M387,580V265L402,265V570L425,500M335,225L402,265M340,235L390,262M335,290L255,430M388,580L425,455M405,575L430,480M420,180L350,255L335,290"],
  [office, "M500,150L530,190V340L560,340L590,345L608,375L600,405L575,418L545,410L537,400V470L570,485L578,510L565,540L543,550V590L550,615L575,600L605,590L640,620L652,670L640,705L620,715L670,745L820,740L790,715V690L820,650L850,640L890,655L900,700L930,705V630H880L850,590M535,170V100L550,100L555,310L575,320V110L592,98L605,110V318L628,295V110M645,620V115L665,95V660L692,720V85L715,75V235V700L738,725V310L750,305L763,315V560L755,575V600M580,435L605,437L603,470L630,590M560,455L645,615M715,680L755,720V570"],
  [office, "M820,240V270L790,295L760,298L735,265V235L770,225L800,220L810,180L850,170L875,175L890,220M850,240L855,290L840,340L850,370L835,430L880,440L870,480L900,500M848,300L915,290L905,380L915,465M850,300L880,310L900,350L880,380M773,433a55,38 0 1,0 110,0a55,38 0 1,0 -110,0M752,605a48,38 0 1,0 96,0a48,38 0 1,0 -96,0M775,440L820,315L815,370L800,385M850,530L870,580L865,610M820,480L860,490L865,540"],
];

// Transit moves and edge runs, drawn once more so that they stand out.
const transits = [
  [kitchen, "M475,120L225,400M125,380H290L430,525L490,580H790M325,650L190,780M635,585L772,692M675,745L735,680"],
  [lounge, "M475,165L670,220V245L470,450L445,490M270,0L140,145V250M120,175L180,235L290,185L320,205M377,415a36,39 0 1,0 72,0a36,39 0 1,0 -72,0M328,605a47,42 0 1,0 94,0a47,42 0 1,0 -94,0M201,570a46,62 0 1,0 90,0M385,190L415,158L440,172H480L502,200V245M655,440L668,470L700,482M130,700L145,720L185,715L205,735L240,725L275,730M460,725L495,715L530,735L560,725L640,720L690,735L712,695L680,665V620L695,580L745,550"],
  [hall, "M410,490L480,440L540,435L640,490M150,438H400M525,345L630,347M134,370H240"],
  [east, "M0,438H65L155,490L350,495L375,515M290,438L350,490L500,618L560,640M405,628H880M0,347L130,350"],
  [bedroom, "M497,290L285,288L250,260L215,225L165,190V60M205,215H523V313L160,320M75,620L118,675M85,45H165"],
  [office, "M420,180L350,255L335,290L255,430M62,390L95,380L125,400L165,375L195,380L212,410L195,440L160,460M180,635L250,648L290,605L340,605M620,715L670,745L820,740M735,265L760,298L790,295L820,270"],
];

const outlines = [
  [kitchen, "M172,50L540,54L535,525M172,50V306L68,312L65,520M55,527L812,525V750M812,525L690,516V406M55,527L60,690"],
  [lounge, "M60,0L85,812L815,803V70"],
  [hall, "M30,197L130,193L150,132L283,130L293,67L606,72V306L630,307M30,197L35,306L152,315V545L630,546"],
  [east, "M53,62L518,62V135L488,138V292L53,297ZM675,187H995V492L530,487L523,305L675,297ZM0,306L515,299M0,546H348V700L535,703V500"],
  [bedroom, "M32,42H265V172L565,168V768L35,770Z"],
  [office, "M503,22L955,18L970,768L512,783ZM27,217L490,230L503,790L48,795Z"],
];

const Local = ({ at, children }) => (
  <g transform={`translate(${at}) scale(0.33333)`}>{children}</g>
);

function FloorMap() {
  return (
    <FloorSvg viewBox="0 237 800 539">
      {[...walls, ...floors, ...obstacles].map(([at, fill, d], i) => (
        <Local at={at} key={i}>
          <path d={d} fill={fill} />
        </Local>
      ))}
      <g fill="none" stroke="#ffffff" strokeLinejoin="round">
        <g strokeWidth="4.3" strokeOpacity="0.66">
          {[...tracks, ...transits].map(([at, d], i) => (
            <Local at={at} key={i}>
              <path d={d} />
            </Local>
          ))}
        </g>
        <g strokeWidth="4.3" strokeDasharray="36 16">
          {outlines.map(([at, d], i) => (
            <Local at={at} key={i}>
              <path d={d} />
            </Local>
          ))}
        </g>
        <path d="M264.5,427V501" strokeWidth="1.3" />
      </g>
      <circle cx="263.2" cy="642.5" r="8" fill="#c3fdc3" />
      <circle cx="245.4" cy="642.5" r="10.2" fill="#00ff00" />
    </FloorSvg>
  );
}

const FanSpeed = () => (
  <IconSvg $size={32} viewBox="0 0 24 24">
    <path d={icons.fan} />
    <path d="M15.2,13.6H24V24H15.2Z" fill="#b3e5fc" />
    <text x="15.6" y="22.8" fontSize="10.6" fontWeight="900" fontFamily="Roboto, sans-serif">
      3
    </text>
  </IconSvg>
);

const pins = [
  ["lock", 770, 278],
  ["knife", 113, 346],
  ["sofa", 149, 588],
  ["run", 371, 444],
  ["shower", 520, 380],
  ["bath", 694.4, 441.4],
  ["bed", 361, 649.5],
  ["desk", 536, 649.4],
  ["pad", 693, 649.4],
];

const tabs = ["menu", "home", "shield", "music", "vacuumFront", "bulb"];

const actions = [
  ["broom", "Odkurzanie"],
  ["water", "Mopowanie"],
  ["homeImport", "Powrót do bazy"],
];

const mainStats = [
  ["Status", "robot", "Charging"],
  ["Battery", "battery", "100%"],
  ["Fan speed", "fan", "Turbo"],
  ["Sensors left", "eye", "25.8h"],
  ["Filter left", "filter", "145.8h"],
];

const brushStats = [
  ["Main brush left", "brush", "160.2h"],
  ["Side brush left", "brush", "42.3h"],
];

function Stats({ items, top, wide }) {
  return (
    <StatRow $cols={items.length} $top={top}>
      {items.map(([label, icon, value]) => (
        <StatCard key={label} $wide={wide}>
          <StatLabel>{label}</StatLabel>
          <StatValue $wide={wide}>
            <Icon name={icon} />
            <span>{value}</span>
          </StatValue>
        </StatCard>
      ))}
    </StatRow>
  );
}

export default function App() {
  return (
    <Page>
      <GlobalStyle />
      <Header>
        {tabs.map((name) => (
          <Tab
            key={name}
            $active={name === "vacuumFront"}
            $bright={name === "vacuumFront" || name === "menu"}
          >
            <Icon name={name} />
          </Tab>
        ))}
      </Header>
      <Actions>
        {actions.map(([icon, label]) => (
          <ActionCard key={label}>
            <Icon name={icon} size={104} />
            <ActionLabel>{label}</ActionLabel>
          </ActionCard>
        ))}
      </Actions>
      <MapArea>
        <FloorMap />
        {pins.map(([name, x, y]) => (
          <Pin key={name} $x={x} $y={y}>
            <Icon name={name} />
          </Pin>
        ))}
      </MapArea>
      <Panel>
        <ModeRow>
          <ModeGroup>
            <ModeClip>
              <RoundButton>
                <Icon name="floorPlan" />
              </RoundButton>
            </ModeClip>
            <span>Pokój</span>
          </ModeGroup>
          <RunPill>
            <Repeat>×1</Repeat>
            <RoundButton>
              <Icon name="play" />
              <Badge>
                <Icon name="floorPlan" size={17} />
              </Badge>
            </RoundButton>
          </RunPill>
        </ModeRow>
        <Controls>
          <Icon name="play" />
          <Icon name="marker" />
          <FanSpeed />
        </Controls>
        <Stats items={mainStats} top={13} />
        <Stats items={brushStats} top={6} wide />
      </Panel>
    </Page>
  );
}
